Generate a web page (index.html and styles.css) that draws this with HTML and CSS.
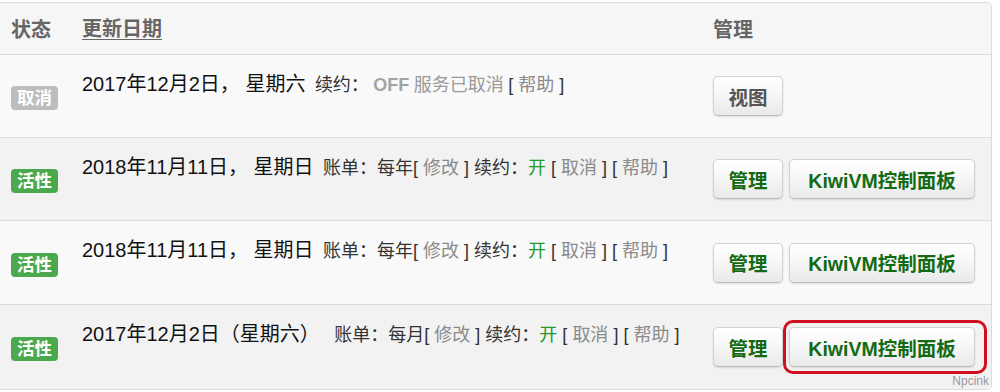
FILE: index.html
```html
<!DOCTYPE html>
<html lang="zh-CN">
<head>
<meta charset="utf-8">
<title>服务</title>
<link rel="stylesheet" href="styles.css">
</head>
<body>
<div class="page">
  <div class="table">
    <div class="row head">
      <div class="cell status">状态</div>
      <div class="cell date"><span class="sort">更新日期</span></div>
      <div class="cell manage">管理</div>
    </div>

    <div class="row odd">
      <div class="cell status"><span class="label label-off">取消</span></div>
      <div class="cell date"><span class="when">2017年12月2日， 星期六</span> <span class="k">续约：</span> <b class="off">OFF</b> <span class="muted">服务已取消</span> <span class="k">[ <a class="lnk">帮助</a> ]</span></div>
      <div class="cell manage"><button class="btn btn-sm plain">视图</button></div>
    </div>

    <div class="row even">
      <div class="cell status"><span class="label label-on">活性</span></div>
      <div class="cell date"><span class="when">2018年11月11日， 星期日</span> <span class="k">账单：每年[ <a class="lnk">修改</a> ] 续约：<span class="on">开</span> [ <a class="lnk">取消</a> ] [ <a class="lnk">帮助</a> ]</span></div>
      <div class="cell manage"><button class="btn btn-sm">管理</button><button class="btn btn-wide">KiwiVM控制面板</button></div>
    </div>

    <div class="row odd tall">
      <div class="cell status"><span class="label label-on">活性</span></div>
      <div class="cell date"><span class="when">2018年11月11日， 星期日</span> <span class="k">账单：每年[ <a class="lnk">修改</a> ] 续约：<span class="on">开</span> [ <a class="lnk">取消</a> ] [ <a class="lnk">帮助</a> ]</span></div>
      <div class="cell manage"><button class="btn btn-sm">管理</button><button class="btn btn-wide">KiwiVM控制面板</button></div>
    </div>

    <div class="row even tall">
      <div class="cell status"><span class="label label-on">活性</span></div>
      <div class="cell date"><span class="when wide">2017年12月2日（星期六）</span> <span class="k">账单：每月[ <a class="lnk">修改</a> ] 续约：<span class="on">开</span> [ <a class="lnk">取消</a> ] [ <a class="lnk">帮助</a> ]</span></div>
      <div class="cell manage"><button class="btn btn-sm">管理</button><span class="highlight"><button class="btn btn-wide">KiwiVM控制面板</button></span></div>
    </div>

    <span class="watermark">Npcink</span>
  </div>
</div>
</body>
</html>
```

FILE: styles.css
```css
html, body {
  margin: 0;
  padding: 0;
  background: #ffffff;
}

body {
  font-family: "Liberation Sans", "Noto Sans CJK SC", sans-serif;
  color: #333333;
}

.page {
  padding-top: 2px;
}

.table {
  position: relative;
  width: 992px;
  box-sizing: border-box;
  border: 1px solid #dcdcdc;
  border-left: 0;
  border-radius: 0 5px 5px 0;
}

.row {
  display: grid;
  grid-template-columns: 72px 630px 1fr;
  box-sizing: border-box;
  height: 83px;
  border-bottom: 1px solid #dcdcdc;
}

.row:last-of-type {
  border-bottom: 0;
}

.row.tall {
  height: 84px;
}

.row.head {
  height: 52px;
  background: #f6f6f6;
  border-radius: 0 5px 0 0;
  font-size: 20px;
  font-weight: bold;
  color: #666666;
}

.row.odd {
  background: #f9f9f9;
}

.row.even {
  background: #f2f2f2;
}

.row.even.tall {
  border-radius: 0 0 5px 0;
}

.cell.status {
  display: flex;
  align-items: center;
  padding-left: 11px;
}

.row.head .cell {
  display: flex;
  align-items: center;
}

.row.head .cell.date {
  padding: 0 0 0 10px;
}

.row.head .cell.manage {
  padding-left: 11px;
}

.sort {
  text-decoration: underline;
  text-underline-offset: 3px;
  text-decoration-thickness: 1px;
}

.cell.date {
  padding: 16px 0 0 10px;
  line-height: 26px;
  white-space: nowrap;
}

.cell.manage {
  display: flex;
  align-items: center;
  gap: 6px;
  padding-left: 11px;
}

.label {
  display: inline-block;
  height: 24px;
  line-height: 24px;
  padding: 0 6px;
  margin-top: 4px;
  border-radius: 4px;
  color: #ffffff;
  font-size: 17.5px;
  font-weight: bold;
}

.label-off {
  background: #bdbdbd;
}

.label-on {
  background: #4ca84c;
}

.when {
  font-size: 20px;
  color: #111111;
  margin-right: 5px;
}

.when.wide {
  margin-right: 10px;
}

.k {
  font-size: 18px;
  color: #333333;
}

.off {
  font-size: 18px;
  color: #a3a3a3;
}

.muted {
  font-size: 18px;
  color: #9a9a9a;
}

.lnk {
  color: #8a8a8a;
}

.on {
  color: #22992a;
}

.btn {
  height: 40px;
  box-sizing: border-box;
  padding: 0;
  border: 1px solid #d2d2d2;
  border-bottom-color: #bcbcbc;
  border-radius: 5px;
  background: linear-gradient(to bottom, #ffffff 0%, #f7f7f7 45%, #e9e9e9 100%);
  box-shadow: 0 1px 2px rgba(0, 0, 0, 0.12);
  font-family: "Liberation Sans", "Noto Sans CJK SC", sans-serif;
  font-size: 19.5px;
  font-weight: bold;
  color: #126a12;
  text-align: center;
}

.btn.plain {
  color: #555555;
}

.btn-sm {
  width: 70px;
}

.btn-wide {
  width: 186px;
}

.highlight {
  position: relative;
  display: inline-flex;
}

.highlight::after {
  content: "";
  position: absolute;
  top: -7px;
  right: -12px;
  bottom: -7px;
  left: -6px;
  border: 3px solid #d0101e;
  border-radius: 10px;
  pointer-events: none;
}

.watermark {
  position: absolute;
  right: 2px;
  bottom: 1px;
  font-size: 12px;
  line-height: 14px;
  color: #9a9a9a;
}
```
